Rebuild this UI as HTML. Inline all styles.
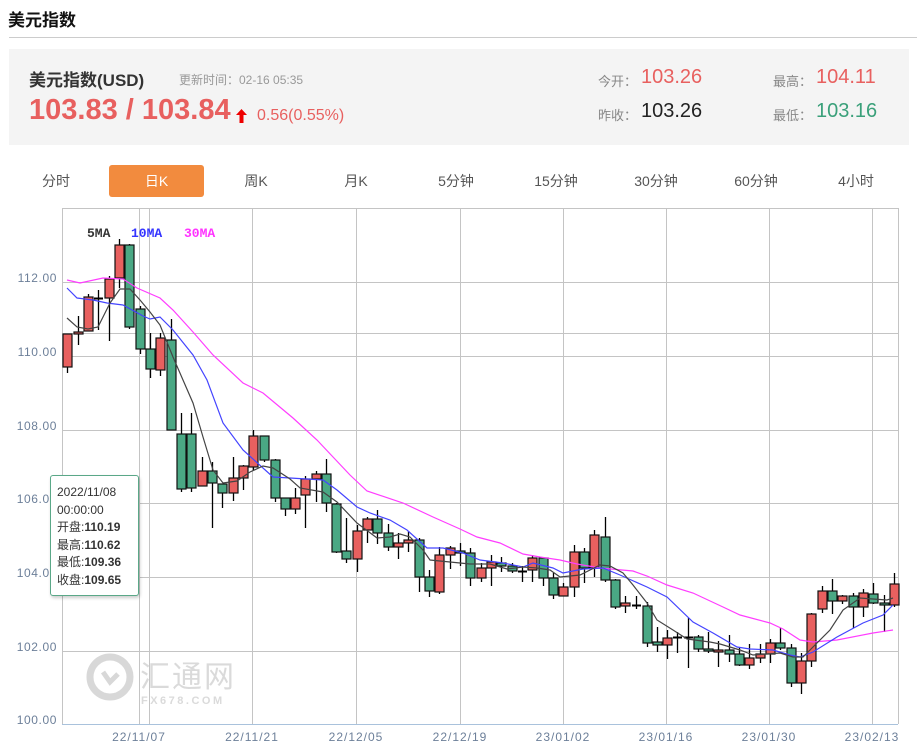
<!DOCTYPE html>
<html><head><meta charset="utf-8">
<style>
*{margin:0;padding:0;box-sizing:border-box}
body{width:917px;height:753px;background:#fff;font-family:"Liberation Sans","Noto Sans CJK SC",sans-serif;position:relative;overflow:hidden;color:#333}
.a{position:absolute;white-space:nowrap}
.tab{position:absolute;top:165px;width:96px;height:32px;line-height:32px;text-align:center;font-size:14px;color:#555}
</style></head><body>
<div class="a" style="left:8px;top:6px;font-size:17px;font-weight:bold;color:#111">美元指数</div>
<div class="a" style="left:9px;top:37px;width:908px;height:1px;background:#ccc"></div>
<div class="a" style="left:9px;top:49px;width:900px;height:96px;background:#f4f4f4"></div>
<div class="a" style="left:29px;top:66px;font-size:17px;font-weight:bold;color:#333">美元指数(USD)</div>
<div class="a" style="left:179px;top:71px;font-size:12px;color:#999">更新时间：02-16 05:35</div>
<div class="a" style="left:29px;top:94px;font-size:29px;font-weight:bold;color:#e8605f">103.83 / 103.84</div>
<svg class="a" style="left:236px;top:109px" width="11" height="14"><path d="M5.5 0 L11 6 L7.5 6 L7.5 14 L3.5 14 L3.5 6 L0 6Z" fill="#e00"/></svg>
<div class="a" style="left:257px;top:107px;font-size:16px;color:#e8605f">0.56(0.55%)</div>
<div class="a" style="left:598px;top:71px;font-size:13px;color:#888">今开：</div>
<div class="a" style="left:641px;top:66px;font-size:20px;color:#e8605f">103.26</div>
<div class="a" style="left:598px;top:105px;font-size:13px;color:#888">昨收：</div>
<div class="a" style="left:641px;top:100px;font-size:20px;color:#222">103.26</div>
<div class="a" style="left:773px;top:71px;font-size:13px;color:#888">最高：</div>
<div class="a" style="left:816px;top:66px;font-size:20px;color:#e8605f">104.11</div>
<div class="a" style="left:773px;top:105px;font-size:13px;color:#888">最低：</div>
<div class="a" style="left:816px;top:100px;font-size:20px;color:#3aa07a">103.16</div>

<div class="tab" style="left:8px">分时</div>
<div class="tab" style="left:109px;width:95px;background:#f28b3e;color:#fff;border-radius:3px">日K</div>
<div class="tab" style="left:208px">周K</div>
<div class="tab" style="left:308px">月K</div>
<div class="tab" style="left:408px">5分钟</div>
<div class="tab" style="left:508px">15分钟</div>
<div class="tab" style="left:608px">30分钟</div>
<div class="tab" style="left:708px">60分钟</div>
<div class="tab" style="left:808px">4小时</div>

<svg id="ch" class="a" style="left:0;top:0" width="917" height="753"></svg>

<div class="a" style="left:50px;top:475px;width:89px;height:121px;background:#fff;border:1.5px solid #5aa888;border-radius:3px;box-shadow:1px 2px 3px rgba(0,0,0,.2);font-size:12px;line-height:17.5px;padding:8px 0 0 6px;color:#333">
2022/11/08<br>00:00:00<br>开盘:<b>110.19</b><br>最高:<b>110.62</b><br>最低:<b>109.36</b><br>收盘:<b>109.65</b></div>

<script>
var s='';
function L(x1,y1,x2,y2,c,w){s+='<line x1="'+x1+'" y1="'+y1+'" x2="'+x2+'" y2="'+y2+'" stroke="'+c+'" stroke-width="'+(w||1)+'"/>';}
[282,333,356,430,503,577,651].forEach(function(y){L(62,y+.5,898,y+.5,'#c4c4c4')});
L(62,208.5,898,208.5,'#c4c4c4');
[62,139,149,252,356,460,563,666,769,872,898].forEach(function(x){L(x+.5,208,x+.5,724,'#c4c4c4')});
L(62,724.5,898,724.5,'#a9c2dc');
[[112,282],[110,356],[108,430],[106,503],[104,577],[102,651],[100,724]].forEach(function(a){
s+='<text x="57" y="'+(a[1])+'" text-anchor="end" font-size="12" letter-spacing="0.6" fill="#6c7f99" font-family="Liberation Sans">'+a[0].toFixed(2)+'</text>';});
[['22/11/07',139],['22/11/21',252],['22/12/05',356],['22/12/19',460],['23/01/02',563],['23/01/16',666],['23/01/30',769],['23/02/13',872]].forEach(function(a){
s+='<text x="'+a[1]+'" y="741" text-anchor="middle" font-size="12" letter-spacing="1" fill="#6c7f99" font-family="Liberation Sans">'+a[0]+'</text>';});
s+='<g opacity="0.8"><circle cx="110" cy="677" r="20" fill="none" stroke="#cfcfcf" stroke-width="7"/><path d="M103 672 L110 682 L118 674" fill="none" stroke="#cfcfcf" stroke-width="5"/>';
s+='<text x="140" y="687" font-size="30" fill="#d2d2d2" font-family="Noto Sans CJK SC" letter-spacing="2">汇通网</text>';
s+='<text x="141" y="704" font-size="11" fill="#d2d2d2" font-family="Liberation Sans" font-weight="bold" letter-spacing="2.5">FX678.COM</text></g>';
var C=[[67,334,367,334,373,'r'],[78,332,334,316,345,'r'],[88,297,331,294,331,'r'],[98,298,298,290,330,'d'],[109,279,298,276,341,'r'],[119,245,278,239,288,'r'],[129,245,327,244,329,'g'],[140,309,349,306,354,'g'],[150,349,369,333,378,'g'],[160,338,370,333,376,'r'],
[171,340,430,319,430,'g'],[181,434,489,413,492,'g'],[191,434,488,413,492,'g'],[202,471,486,457,486,'r'],[212,471,483,462,528,'g'],[222,484,493,484,508,'g'],[233,478,493,457,501,'r'],[243,466,478,465,490,'r'],[253,436,467,430,470,'r'],[264,436,460,436,462,'g'],
[275,460,498,459,502,'g'],[285,498,509,498,516,'g'],[295,498,509,488,514,'r'],[305,479,495,476,528,'r'],[316,474,479,471,502,'r'],[326,474,503,459,512,'g'],[336,504,552,503,553,'g'],[346,551,559,518,563,'g'],[357,531,559,525,572,'r'],[367,519,530,517,543,'r'],
[377,519,533,510,544,'g'],[388,533,547,524,551,'g'],[398,543,547,533,559,'r'],[408,540,543,531,552,'r'],[419,540,577,538,592,'g'],[429,577,591,570,597,'g'],[439,555,592,547,594,'r'],[450,548,555,546,569,'r'],[460,551,553,543,566,'g'],[470,553,578,548,586,'g'],
[481,568,578,563,582,'r'],[491,562,568,555,586,'r'],[501,563,566,557,572,'g'],[512,566,571,563,573,'g'],[522,571,571,566,582,'d'],[532,558,570,555,582,'r'],[543,558,578,557,586,'g'],[553,578,595,573,599,'g'],[563,587,596,583,596,'r'],[574,552,587,545,597,'r'],
[584,552,568,548,583,'g'],[594,535,568,530,577,'r'],[605,537,580,517,582,'g'],[615,580,607,579,609,'g'],[625,603,606,596,613,'r'],[636,605,605,596,609,'d'],[647,606,643,602,647,'g'],[657,642,645,627,652,'g'],[667,638,645,630,659,'r'],[677,637,637,632,653,'d'],
[688,637,637,618,668,'d'],[698,637,649,635,652,'g'],[708,649,651,632,653,'g'],[718,650,652,641,667,'r'],[729,650,654,635,662,'g'],[739,654,665,648,666,'g'],[749,658,665,644,669,'r'],[760,654,658,644,663,'r'],[770,643,654,639,663,'r'],[780,643,648,628,650,'g'],
[791,648,683,644,687,'g'],[801,661,683,653,694,'r'],[811,614,661,613,667,'r'],[822,591,609,586,613,'r'],[832,591,601,579,614,'g'],[842,596,601,595,604,'r'],[853,596,607,593,628,'g'],[863,593,607,589,617,'r'],[873,594,603,583,604,'g'],[884,603,605,595,632,'g'],[894,584,605,573,607,'r']];
C.forEach(function(c){
 L(c[0]+.5,c[3],c[0]+.5,c[4],'#000',1.3);
 var h=c[2]-c[1];
 if(c[5]=='d'||h<2){L(c[0]-4,c[1]+.5,c[0]+5,c[1]+.5,'#000',2);return;}
 var f=c[5]=='r'?'#e8605f':'#4aa884';
 s+='<rect x="'+(c[0]-4)+'" y="'+c[1]+'" width="9" height="'+h+'" fill="'+f+'" stroke="#111" stroke-width="1.2"/>';
});
function P(pts,c){s+='<polyline fill="none" stroke="'+c+'" stroke-width="1.2" points="'+pts+'"/>';}
P('67,280 80,283 103,278 123,279 137,288 160,298 173,310 193,332 213,355 243,383 263,393 293,418 317,440 350,475 367,491 403,503 433,517 460,529 477,537 500,543 523,554 540,557 560,560 577,564 600,568 633,571 647,576 667,585 693,593 723,607 740,615 770,623 783,629 800,640 813,642 837,640 873,633 893,630','#ff3dff');
P('67,288 77,298 93,300 107,303 123,305 143,316 150,319 160,317 173,330 193,355 207,380 223,423 243,450 273,477 290,478 323,480 337,490 357,507 370,513 390,520 407,530 427,548 443,548 463,553 480,560 503,563 523,567 533,563 553,568 563,573 583,569 603,568 620,575 647,587 667,597 693,622 713,633 737,647 750,649 773,650 790,655 800,657 813,652 837,637 863,623 883,615 893,605','#4444ff');
P('67,318 77,327 88,329 98,327 110,303 120,289 130,289 140,300 150,312 160,325 173,357 193,403 203,437 213,470 223,483 237,481 250,472 263,466 273,468 290,479 300,488 323,492 337,502 357,523 377,538 390,537 400,534 410,537 423,550 430,560 450,562 470,564 490,564 507,569 523,567 537,568 550,570 560,577 580,575 600,565 610,566 623,573 633,585 647,603 657,620 673,630 687,639 710,642 720,644 740,650 753,655 767,654 780,653 793,657 803,657 813,647 830,630 843,610 860,598 873,599 887,600 893,598','#444');
s+='<text x="87" y="237" font-size="13" font-weight="bold" fill="#333" font-family="Liberation Mono">5MA</text>';
s+='<text x="131" y="237" font-size="13" font-weight="bold" fill="#3333ff" font-family="Liberation Mono">10MA</text>';
s+='<text x="184" y="237" font-size="13" font-weight="bold" fill="#ff33ff" font-family="Liberation Mono">30MA</text>';
document.getElementById('ch').innerHTML=s;
</script>
</body></html>
